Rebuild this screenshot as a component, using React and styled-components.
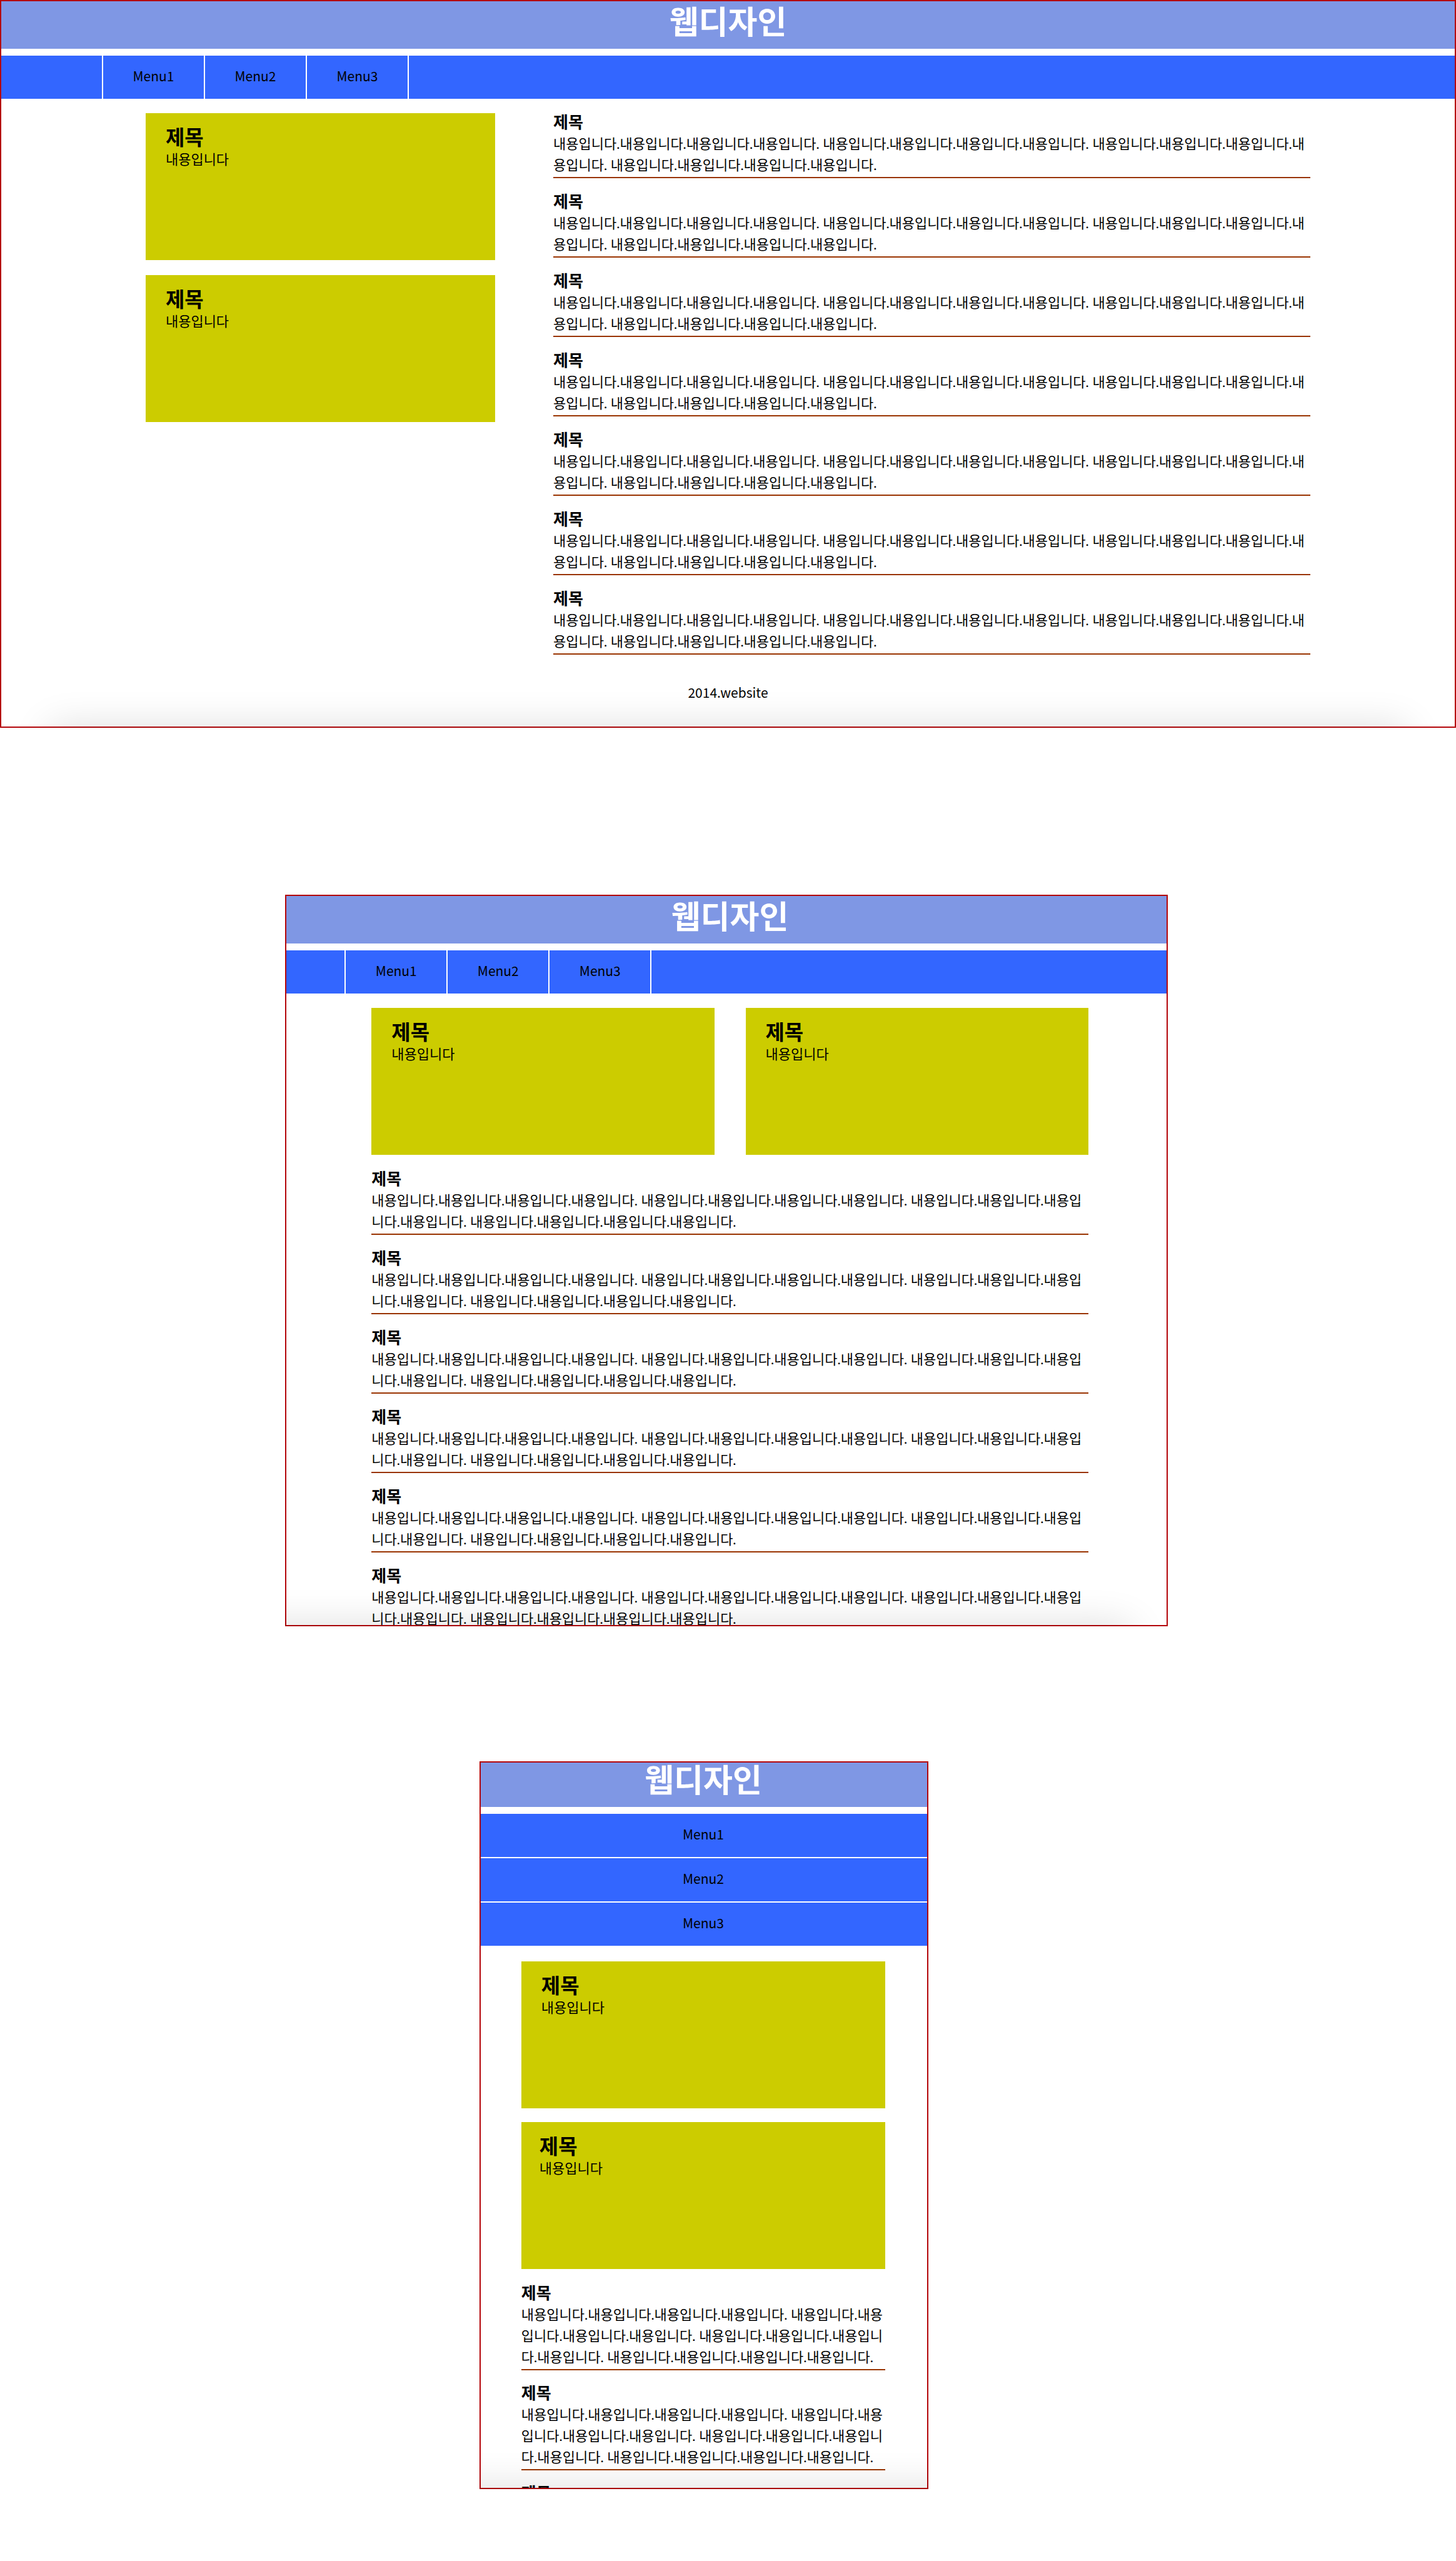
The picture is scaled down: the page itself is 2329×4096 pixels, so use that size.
import React from "react";
import styled, { createGlobalStyle, css } from "styled-components";

const GlobalStyle = createGlobalStyle`
  *, *::before, *::after { box-sizing: border-box; }
  body {
    margin: 0;
    background: #fff;
    color: #000;
    font: 22px/34px "Noto Sans CJK KR", sans-serif;
  }
  h1, h2, h3, p, ul { margin: 0; padding: 0; }
`;

const Showcase = styled.main`
  display: flex;
  flex-direction: column;
  align-items: flex-start;
`;

const frames = {
  desktop: css`
    width: 100%;
    height: 1164px;
  `,
  tablet: css`
    width: 1412px;
    height: 1170px;
    margin: 267px 0 0 456px;
  `,
  mobile: css`
    width: 718px;
    height: 1164px;
    margin: 216px 0 0 767px;
  `,
};

const shades = {
  desktop: "0 80px",
  tablet: "0 60px 0 -80px",
  mobile: "0 -80px",
};

const Frame = styled.section`
  position: relative;
  overflow: hidden;
  background: #fff;
  outline: 2px solid #b4060a;
  outline-offset: -2px;
  ${(p) => frames[p.$device]}

  &::after {
    content: "";
    position: absolute;
    inset: 100% 0 auto 0;
    height: 80px;
    margin: ${(p) => shades[p.$device]};
    box-shadow: 0 0 64px rgba(0, 0, 0, 0.14);
    pointer-events: none;
  }
`;

const pages = {
  desktop: css`
    width: 100%;
  `,
  tablet: css`
    width: 1433px;
    margin-left: -5px;
  `,
  mobile: css`
    width: 728px;
    margin: -5px 0 0 -6px;
  `,
};

const Page = styled.div`
  ${(p) => pages[p.$device]}
`;

const Header = styled.header`
  display: flex;
  justify-content: center;
  height: 78px;
  margin-bottom: 11px;
  background: #7f97e4;
  color: #fff;
`;

const SiteTitle = styled.h1`
  font-size: 51px;
  line-height: 64px;
  font-weight: 700;
`;

const Nav = styled.nav`
  background: #36f;
  padding-left: ${(p) => (p.$stacked ? "0" : "7%")};
`;

const MenuList = styled.ul`
  display: flex;
  flex-direction: ${(p) => (p.$stacked ? "column" : "row")};
  list-style: none;
`;

const MenuItem = styled.li`
  ${(p) =>
    p.$stacked
      ? css`
          &:not(:first-child) {
            border-top: 2px solid #fff;
          }
        `
      : css`
          width: 163px;
          border-right: 2px solid #fff;

          &:first-child {
            width: 165px;
            border-left: 2px solid #fff;
          }
        `}
`;

const MenuLink = styled.a`
  display: flex;
  align-items: center;
  justify-content: center;
  height: 69px;
  padding-bottom: 5px;
  font-size: 21px;
  color: inherit;
  text-decoration: none;
`;

const contents = {
  desktop: css`
    justify-content: space-between;
    align-items: flex-start;
    margin-top: 23px;
  `,
  tablet: css`
    flex-direction: column;
    gap: 24px;
    margin-top: 23px;
  `,
  mobile: css`
    flex-direction: column;
    gap: 24px;
    margin-top: 25px;
  `,
};

const Content = styled.div`
  display: flex;
  width: 80%;
  margin: 0 auto;
  ${(p) => contents[p.$device]}
`;

const asides = {
  desktop: css`
    flex-direction: column;
    gap: 24px;
    width: 30%;
  `,
  tablet: css`
    gap: 50px;
  `,
  mobile: css`
    flex-direction: column;
    gap: 22px;
  `,
};

const Aside = styled.aside`
  display: flex;
  ${(p) => asides[p.$device]}
`;

const Card = styled.div`
  flex: 1 0 auto;
  height: 235px;
  padding: 17px ${(p) => (p.$tight ? "29px" : "32px")};
  background: #cc0;
`;

const CardTitle = styled.h2`
  font-size: 33px;
  line-height: 40px;
  font-weight: 700;
`;

const Body = styled.p`
  font-family: Lato, "Noto Sans CJK KR", sans-serif;
`;

const Articles = styled.div`
  display: flex;
  flex-direction: column;
  gap: ${(p) => (p.$device === "mobile" ? "22px" : "23px")};
  width: ${(p) => (p.$device === "desktop" ? "65%" : "100%")};
`;

const Article = styled.article`
  padding-bottom: 2px;
  border-bottom: 2px solid #930;
`;

const ArticleTitle = styled.h3`
  font-size: 26px;
  line-height: 26px;
  font-weight: 700;
  padding-bottom: 6px;
`;

const Footer = styled.footer`
  margin-top: 43px;
  font-size: 21px;
  text-align: center;
`;

const menus = ["Menu1", "Menu2", "Menu3"];
const sentence = "내용입니다.";
const paragraph = Array(4).fill(sentence.repeat(4)).join(" ");

function Site({ device, articles }) {
  const stacked = device === "mobile";
  return (
    <Frame $device={device}>
      <Page $device={device}>
        <Header>
          <SiteTitle>웹디자인</SiteTitle>
        </Header>
        <Nav $stacked={stacked}>
          <MenuList $stacked={stacked}>
            {menus.map((menu) => (
              <MenuItem key={menu} $stacked={stacked}>
                <MenuLink href="#">{menu}</MenuLink>
              </MenuItem>
            ))}
          </MenuList>
        </Nav>
        <Content $device={device}>
          <Aside $device={device}>
            {[0, 1].map((i) => (
              <Card key={i} $tight={stacked && i === 1}>
                <CardTitle>제목</CardTitle>
                <Body>내용입니다</Body>
              </Card>
            ))}
          </Aside>
          <Articles $device={device}>
            {Array.from({ length: articles }, (_, i) => (
              <Article key={i}>
                <ArticleTitle>제목</ArticleTitle>
                <Body>{paragraph}</Body>
              </Article>
            ))}
          </Articles>
        </Content>
        {device === "desktop" && <Footer>2014.website</Footer>}
      </Page>
    </Frame>
  );
}

export default function App() {
  return (
    <>
      <GlobalStyle />
      <Showcase>
        <Site device="desktop" articles={7} />
        <Site device="tablet" articles={6} />
        <Site device="mobile" articles={3} />
      </Showcase>
    </>
  );
}
